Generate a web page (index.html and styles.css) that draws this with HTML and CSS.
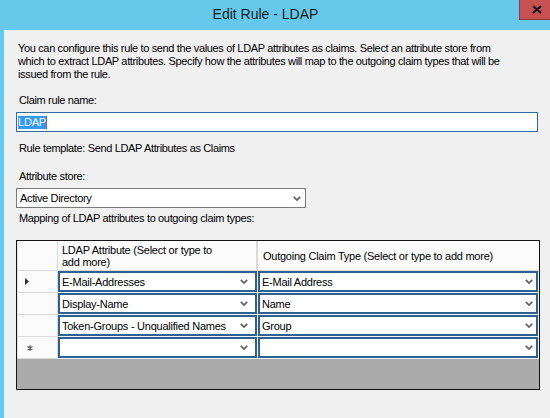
FILE: index.html
```html
<!DOCTYPE html>
<html lang="en">
<head>
<meta charset="utf-8">
<title>Edit Rule - LDAP</title>
<link rel="stylesheet" href="styles.css">
</head>
<body>
<div class="window">
  <div class="titlebar">
    <div class="title">Edit Rule - LDAP</div>
    <div class="close">
      <svg width="10" height="9" viewBox="0 0 10 9"><path d="M1 1 L9 8 M9 1 L1 8" stroke="#161616" stroke-width="2.2" fill="none"/></svg>
    </div>
  </div>
  <div class="client">
    <p class="desc">You can configure this rule to send the values of LDAP attributes as claims. Select an attribute store from<br>which to extract LDAP attributes. Specify how the attributes will map to the outgoing claim types that will be<br>issued from the rule.</p>
    <p class="lbl lbl-name">Claim rule name:</p>
    <div class="textbox"><span class="sel">LDAP</span><span class="caret"></span></div>
    <p class="lbl lbl-template">Rule template: Send LDAP Attributes as Claims</p>
    <p class="lbl lbl-store">Attribute store:</p>
    <div class="combo">
      <span>Active Directory</span>
      <svg class="chev" width="8" height="5" viewBox="0 0 8 5"><path d="M0.8 0.8 L4 4 L7.2 0.8" stroke="#5f5f5f" stroke-width="1.7" fill="none"/></svg>
    </div>
    <p class="lbl lbl-map">Mapping of LDAP attributes to outgoing claim types:</p>
    <div class="grid">
      <div class="grid-head">
        <div class="hcorner"></div>
        <div class="hcell hcell-1">LDAP Attribute (Select or type to<br>add more)</div>
        <div class="hcell hcell-2">Outgoing Claim Type (Select or type to add more)</div>
        <div class="hfill"></div>
      </div>
      <div class="row">
        <div class="rh"><svg class="arrow" width="4" height="7" viewBox="0 0 4 7"><path d="M0 0 L4 3.5 L0 7 Z" fill="#333"/></svg></div>
        <div class="cell cell-1"><span>E-Mail-Addresses</span><svg class="chev" width="8" height="5" viewBox="0 0 8 5"><path d="M0.8 0.8 L4 4 L7.2 0.8" stroke="#5f5f5f" stroke-width="1.7" fill="none"/></svg></div>
        <div class="cell cell-2"><span>E-Mail Address</span><svg class="chev" width="8" height="5" viewBox="0 0 8 5"><path d="M0.8 0.8 L4 4 L7.2 0.8" stroke="#5f5f5f" stroke-width="1.7" fill="none"/></svg></div>
        <div class="rfill"></div>
      </div>
      <div class="row">
        <div class="rh"></div>
        <div class="cell cell-1"><span>Display-Name</span><svg class="chev" width="8" height="5" viewBox="0 0 8 5"><path d="M0.8 0.8 L4 4 L7.2 0.8" stroke="#5f5f5f" stroke-width="1.7" fill="none"/></svg></div>
        <div class="cell cell-2"><span>Name</span><svg class="chev" width="8" height="5" viewBox="0 0 8 5"><path d="M0.8 0.8 L4 4 L7.2 0.8" stroke="#5f5f5f" stroke-width="1.7" fill="none"/></svg></div>
        <div class="rfill"></div>
      </div>
      <div class="row">
        <div class="rh"></div>
        <div class="cell cell-1"><span>Token-Groups - Unqualified Names</span><svg class="chev" width="8" height="5" viewBox="0 0 8 5"><path d="M0.8 0.8 L4 4 L7.2 0.8" stroke="#5f5f5f" stroke-width="1.7" fill="none"/></svg></div>
        <div class="cell cell-2"><span>Group</span><svg class="chev" width="8" height="5" viewBox="0 0 8 5"><path d="M0.8 0.8 L4 4 L7.2 0.8" stroke="#5f5f5f" stroke-width="1.7" fill="none"/></svg></div>
        <div class="rfill"></div>
      </div>
      <div class="row">
        <div class="rh"><svg class="star" width="6" height="6" viewBox="0 0 6 6"><path d="M3 0.3 V5.7 M0.5 1.5 L5.5 4.5 M5.5 1.5 L0.5 4.5" stroke="#5a5a5a" stroke-width="1.3" fill="none"/></svg></div>
        <div class="cell cell-1"><span></span><svg class="chev" width="8" height="5" viewBox="0 0 8 5"><path d="M0.8 0.8 L4 4 L7.2 0.8" stroke="#5f5f5f" stroke-width="1.7" fill="none"/></svg></div>
        <div class="cell cell-2"><span></span><svg class="chev" width="8" height="5" viewBox="0 0 8 5"><path d="M0.8 0.8 L4 4 L7.2 0.8" stroke="#5f5f5f" stroke-width="1.7" fill="none"/></svg></div>
        <div class="rfill"></div>
      </div>
      <div class="grid-empty"></div>
    </div>
  </div>
</div>
</body>
</html>
```
FILE: styles.css
```css
html, body {
  margin: 0;
  padding: 0;
}
body {
  width: 550px;
  height: 418px;
  overflow: hidden;
  background: #66c9eb;
  font-family: "Liberation Sans", Arial, sans-serif;
  font-size: 11px;
  letter-spacing: -0.35px;
  color: #000;
}
.window {
  display: flex;
  flex-direction: column;
  height: 418px;
}
.titlebar {
  height: 30px;
  flex: none;
  display: flex;
  padding-left: 12px;
}
.title {
  flex: 1;
  text-align: center;
  font-size: 14px;
  letter-spacing: 0;
  line-height: 29px;
  color: #1b1b1b;
}
.close {
  width: 31px;
  height: 20px;
  box-sizing: border-box;
  background: #c75050;
  border-left: 1px solid #9a3838;
  border-bottom: 1px solid #9a3838;
  display: flex;
  align-items: center;
  justify-content: center;
  padding-left: 3px;
}
.close svg { display: block; }
.client {
  flex: 1;
  margin-left: 4px;
  background: #f0f0f0;
  padding: 12px 11px 0 12px;
}
p { margin: 0; }
.desc {
  line-height: 13px;
  padding-left: 2px;
  white-space: nowrap;
}
.lbl {
  line-height: 13px;
  padding-left: 3px;
}
.lbl-name { margin-top: 13px; }
.textbox {
  margin-top: 5px;
  width: 522px;
  height: 20px;
  box-sizing: border-box;
  border: 1px solid #2f6ca0;
  background: #fff;
  display: flex;
  align-items: center;
  padding-left: 1px;
}
.sel {
  background: #3399ff;
  color: #fff;
  line-height: 13px;
  height: 13px;
  letter-spacing: -0.2px;
}
.caret {
  width: 1px;
  height: 13px;
  background: #c05a10;
}
.lbl-template { margin-top: 10px; }
.lbl-store { margin-top: 15px; }
.combo {
  margin-top: 5px;
  width: 290px;
  height: 20px;
  box-sizing: border-box;
  border: 1px solid #7a7a7a;
  background: #fff;
  display: flex;
  align-items: center;
  justify-content: space-between;
  padding: 0 4px 0 3px;
}
.chev { display: block; flex: none; }
.lbl-map { margin-top: 4px; }
.grid {
  margin-top: 15px;
  width: 524px;
  height: 150px;
  box-sizing: border-box;
  border: 1px solid #141414;
  background: #ababab;
  display: flex;
  flex-direction: column;
}
.grid-head, .row {
  display: grid;
  grid-template-columns: 41px 200px 280px 1px;
}
.grid-head {
  height: 30px;
  flex: none;
  background: #fbfbfb;
  border-bottom: 1px solid #dadada;
  box-sizing: border-box;
}
.hcorner {
  border-left: 1px solid #e2e2e2;
  border-right: 1px solid #dadada;
}
.hcell {
  display: flex;
  align-items: center;
  line-height: 12px;
  padding-left: 4px;
  letter-spacing: -0.25px;
}
.hcell-1 { border-right: 2px solid #dadada; }
.hcell-2 { padding-left: 5px; }
.row {
  height: 22px;
  flex: none;
  background: #f7f7f7;
}
.rh {
  background: #fbfbfb;
  border-left: 1px solid #e2e2e2;
  border-right: 1px solid #dadada;
  border-bottom: 1px solid #dadada;
  box-sizing: border-box;
  display: flex;
  align-items: center;
}
.arrow { display: block; margin-left: 7px; }
.star { display: block; margin-left: 9px; }
.cell {
  background: #fff;
  border: 2px solid #2e6193;
  box-sizing: border-box;
  margin-bottom: 1px;
  display: flex;
  align-items: center;
  justify-content: space-between;
  padding-left: 2px;
  letter-spacing: -0.25px;
}
.cell-1 { margin-right: 1px; padding-right: 7px; }
.cell-2 { padding-right: 3px; }
.rfill { background: #f7f7f7; }
.hfill { background: #fbfbfb; }
.grid-empty { flex: 1; }
```
